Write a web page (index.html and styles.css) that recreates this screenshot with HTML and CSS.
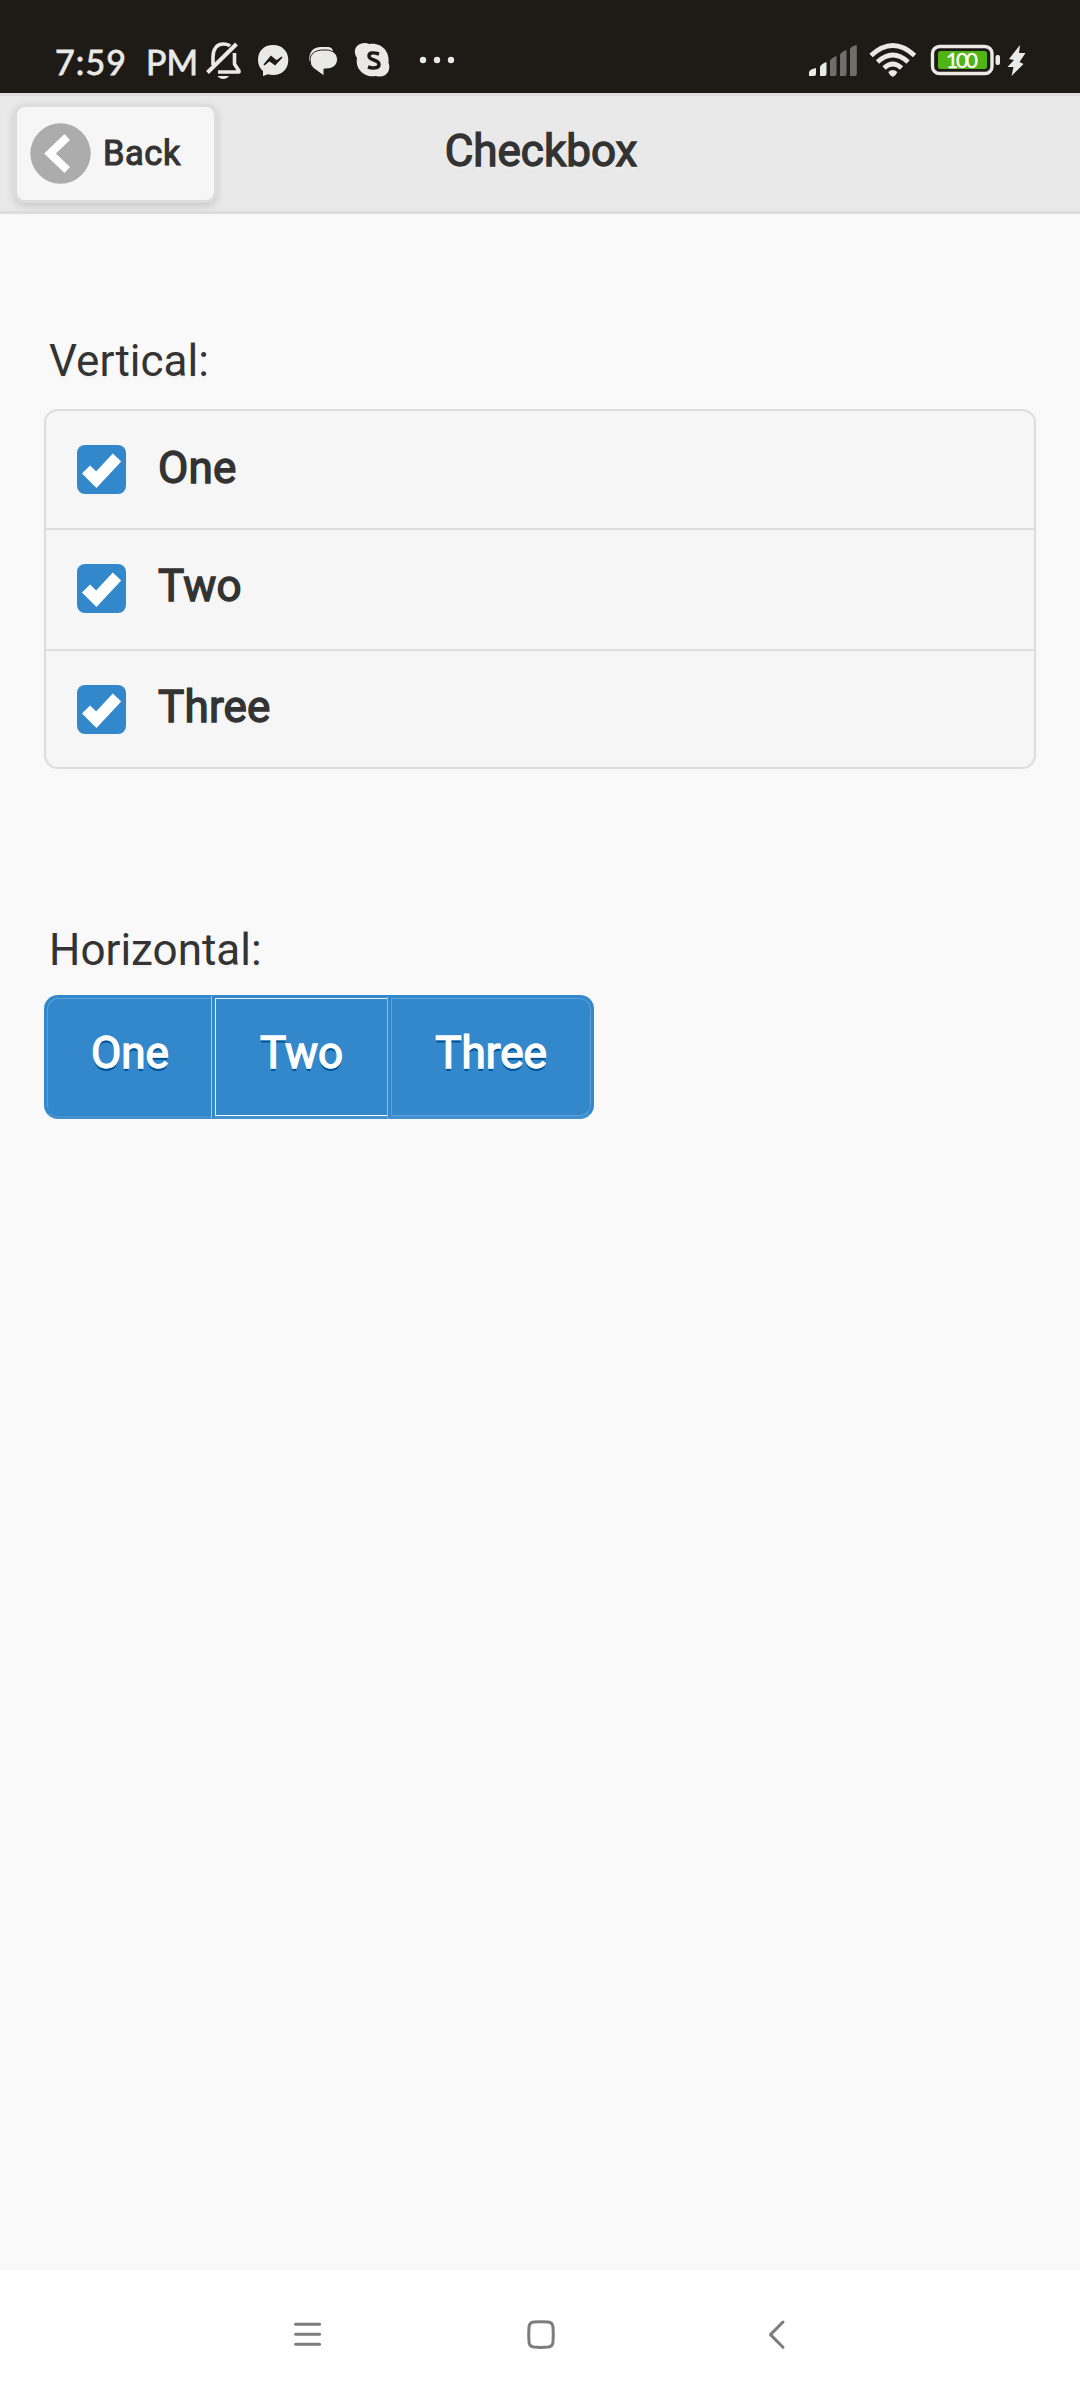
FILE: index.html
```html
<!DOCTYPE html>
<html lang="en">
<head>
<meta charset="utf-8">
<title>Checkbox</title>
<link rel="stylesheet" href="styles.css">
</head>
<body>
<div class="status">
  <svg class="status-icons" viewBox="0 0 1080 93" fill="#e9e9e7">
    <g class="clock">
      <text x="55" y="75" textLength="71">7:59</text>
      <text x="146" y="75" textLength="52">PM</text>
    </g>
    <g fill="none" stroke="#e9e9e7" stroke-width="3.6" stroke-linejoin="round">
      <path d="M213 65V57C213 49 217 44 223 44Q228 44 230 46M234.500 53V64L239 71V72H218"/>
      <path d="M207.500 72.500L236.500 44" stroke-width="4"/>
    </g>
    <path d="M217.500 76h11.500q-2 3-5.700 3t-5.800-3z"/>
    <path d="M273 45c9 0 15.300 6 15.300 15S282 75 273 75q-3 0-5-.800l-5 1.800v-5q-5-4-5-11c0-9 6-15 15-15z"/>
    <path d="M264 65l7-8.500 5.500 4.500 5.500-4-7 7.500-5.500-4z" fill="#1e1b16" stroke="#1e1b16" stroke-width="1.500"/>
    <path d="M309 61q0-14 12-14h7q4 0 5 4v4z"/>
    <path d="M323 50h3c7 0 11.500 4 11.500 9.500S333 69 326 69h-2v7l-11-8q-3-3-3-8c0-6 5-10 13-10z" stroke="#1e1b16" stroke-width="1"/>
    <path d="M360 44q5-2 9 0c13-2 21 8 19.500 19q2 4-.500 9-4 6-12 4c-12 2-21-7-19-18-4-6-2-12 3-14z"/>
    <path d="M379 54q-10-3-10 2c0 5 10 3 10 8.500 0 4-6 4-11 2.500" fill="none" stroke="#1e1b16" stroke-width="3.500"/>
    <circle cx="423" cy="60" r="3.200"/><circle cx="437" cy="60" r="3.200"/><circle cx="451" cy="60" r="3.200"/>
    <path d="M809 76v-4q1-3 7-4v6q0 2-2 2zM820 76V67q1-3 6.500-5v12q0 2-2 2z"/>
    <path d="M830 76V61q1-3 6.500-5v18q0 2-2 2zM840 76V55q1-3 6.500-5v24q0 2-2 2zM850 76V49q1-3 6.800-4v29q0 2-2 2z" fill="#706e6a"/>
    <g fill="none" stroke="#e9e9e7" stroke-width="4.800">
      <path d="M871 55.500q21.800-20 43.600 0M877.500 62q15.300-14 30.600 0M884 68q8.800-8 17.600 0"/>
    </g>
    <path d="M888.200 72q4.600-4 9.200 0-1 3-4.600 5-3.600-2-4.600-5z"/>
    <rect x="932.500" y="46.500" width="59.500" height="27" rx="7" fill="none" stroke="#e9e9e7" stroke-width="3.400"/>
    <rect x="938" y="51" width="49" height="18" rx="2.500" fill="#50b414"/>
    <text class="charge" x="946" y="67.500" textLength="32">100</text>
    <rect x="995.500" y="55" width="4.500" height="10" rx="2"/>
    <path d="M1020 45l-11 14 5 1-6.500 7h6l-2 9 12-12-4-2 6-9h-6.500z"/>
  </svg>
</div>
<header class="header">
  <a class="back">
    <svg class="back-icon" viewBox="0 0 61 61"><circle cx="30.500" cy="30.500" r="30.200" fill="#acacac"/><path d="M37.200 14L20 30.500 37.200 47" fill="none" stroke="#fff" stroke-width="8"/></svg>
    <span>Back</span>
  </a>
  <h1 class="title">Checkbox</h1>
</header>
<main class="content">
  <div class="legend">Vertical:</div>
  <div class="list">
    <label class="row"><svg class="check" viewBox="0 0 49 49"><path d="M9 24.500L19.300 34.700 40 12.500" /></svg><span>One</span></label>
    <label class="row"><svg class="check" viewBox="0 0 49 49"><path d="M9 24.500L19.300 34.700 40 12.500" /></svg><span>Two</span></label>
    <label class="row"><svg class="check" viewBox="0 0 49 49"><path d="M9 24.500L19.300 34.700 40 12.500" /></svg><span>Three</span></label>
  </div>
  <div class="legend second">Horizontal:</div>
  <div class="segments">
    <label class="segment first">One</label>
    <label class="segment middle">Two</label>
    <label class="segment last">Three</label>
  </div>
</main>
<nav class="nav">
  <svg class="nav-icons" viewBox="0 2.700 1080 130" fill="none" stroke="#7c7c7c" stroke-width="3" stroke-linecap="round" stroke-linejoin="round">
    <path d="M295.600 57h24M295.600 67h24M295.600 77h24"/>
    <path d="M534 54.800q7-.600 14 0 4.500.300 5 5 .600 7 0 15-.500 4.500-5 5-7 .600-14 0-4.500-.500-5-5-.600-8 0-15 .500-4.700 5-5z"/>
    <path d="M783 54.700L770.500 67.300 783 80"/>
  </svg>
</nav>
</body>
</html>
```
FILE: styles.css
```css
* { box-sizing: border-box; }

body {
  margin: 0;
  width: 1080px;
  height: 2400px;
  display: flex;
  flex-direction: column;
  background: #f9f9f9;
  color: #333;
  font-family: Roboto, sans-serif;
  font-size: 44px;
  line-height: 57px;
  text-shadow: 0 3px 0 #f3f3f3;
}

.status { height: 93px; background: #1e1b16; text-shadow: none; }
.status-icons { display: block; width: 1080px; height: 93px; }
.clock { font: 34px Lato, sans-serif; stroke: #e9e9e7; stroke-width: 0.8px; }
.charge { font: 21px Lato, sans-serif; fill: #fff; stroke: #fff; stroke-width: 0.3px; }

.header {
  height: 121px;
  display: grid;
  grid-template-columns: 203px 1fr 201px;
  padding: 8px 14px;
  background: #e9e9e9;
  border: solid #ddd;
  border-width: 3px 0;
  text-shadow: 0 3px 0 #eee;
}

.back {
  height: 99px;
  display: flex;
  align-items: center;
  gap: 12px;
  padding-left: 13px;
  background: #f6f6f6;
  border: 3px solid #ddd;
  border-radius: 11px;
  box-shadow: 0 3px 8px rgba(0, 0, 0, 0.15);
  font-size: 34.4px;
  letter-spacing: 0.6px;
  -webkit-text-stroke: 1.1px #333;
  text-shadow: none;
}
.back-icon { width: 61px; height: 61px; }

.title {
  margin: 19px 0 0;
  font-size: 44px;
  font-weight: 400;
  text-align: center;
  -webkit-text-stroke: 1.4px #333;
}

.content { flex: 1; padding: 119px 44px 0; }
.legend { padding-left: 5px; height: 76px; line-height: 57px; }

.list {
  height: 360px;
  display: grid;
  grid-template-rows: 119px 121px 120px;
  background: #f6f6f6;
  border-radius: 14px;
}
.row {
  display: flex;
  align-items: center;
  gap: 32px;
  padding: 0 31px;
  border: solid #ddd;
  border-width: 2px 2px 0;
  letter-spacing: 0.2px;
  -webkit-text-stroke: 1.4px #333;
}
.row:first-child { border-radius: 14px 14px 0 0; }
.row:nth-child(2) { padding-bottom: 3px; }
.row:last-child { border-bottom-width: 2px; border-radius: 0 0 14px 14px; }
.row span { margin-top: -3px; }

.check { width: 49px; height: 49px; border-radius: 8px; background: #38c; }
.check path { fill: none; stroke: #fff; stroke-width: 11.5px; }

.second { margin-top: 153px; height: 73px; }

.segments {
  display: flex;
  width: 550px;
  height: 124px;
  color: #fff;
  text-shadow: 0 3px 0 #005599;
  -webkit-text-stroke: 1.4px #fff;
}
.segment {
  background: #38c;
  border: 3px solid #38c;
  border-bottom-color: #4391cf;
  line-height: 111px;
  text-align: center;
  box-shadow: inset 0 0 0 1px #5ca1d7;
}
.first { width: 168px; padding-left: 2px; border-right: 1px solid #a3cbea; border-radius: 14px 0 0 14px; box-shadow: inset 1px 1px 0 #5ca1d7; }
.middle { width: 176px; padding-left: 1px; border-right: 1px solid #8bbde4; box-shadow: inset 1px 1px 0 #e5f0f9, inset 0 -1px 0 #fff; }
.last { flex: 1; border-radius: 0 14px 14px 0; }

.nav { height: 130px; background: #fff; }
.nav-icons { display: block; width: 1080px; height: 130px; }
```
